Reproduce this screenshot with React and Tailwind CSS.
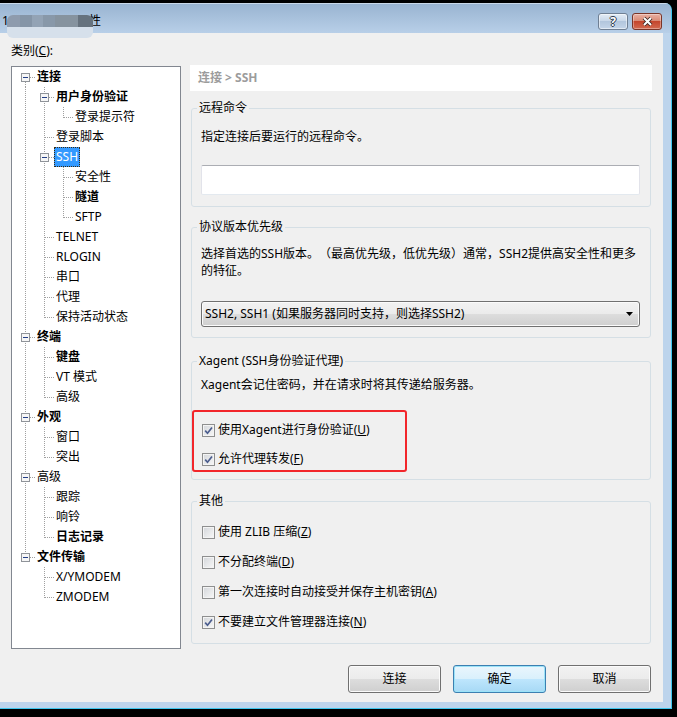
import React from 'react';

const rows = [
  ['连接', 'F', true, true],
  ['用户身份验证', '|T', true, true],
  ['登录提示符', '||L'],
  ['登录脚本', '|T'],
  ['SSH', '|T', false, true, true],
  ['安全性', '||T'],
  ['隧道', '||T', true],
  ['SFTP', '||L'],
  ['TELNET', '|T'],
  ['RLOGIN', '|T'],
  ['串口', '|T'],
  ['代理', '|T'],
  ['保持活动状态', '|L'],
  ['终端', 'T', true, true],
  ['键盘', '|T', true],
  ['VT 模式', '|T'],
  ['高级', '|L'],
  ['外观', 'T', true, true],
  ['窗口', '|T'],
  ['突出', '|L'],
  ['高级', 'T', false, true],
  ['跟踪', '|T'],
  ['响铃', '|T'],
  ['日志记录', '|L', true],
  ['文件传输', 'L', true, true],
  ['X/YMODEM', ' T'],
  ['ZMODEM', ' L'],
];

// one indent cell of the tree (dotted connector lines + optional expander box)
function Cell({ type, exp }) {
  const dot = { stroke: '#a0a0a0', strokeWidth: 1, strokeDasharray: '1 1', shapeRendering: 'crispEdges' };
  return (
    <svg width="19" height="20" className="block shrink-0">
      {(type === '|' || type === 'T') && <line x1="9.5" y1="0" x2="9.5" y2="20" {...dot} />}
      {type === 'L' && <line x1="9.5" y1="0" x2="9.5" y2="11" {...dot} />}
      {type === 'F' && <line x1="9.5" y1="11" x2="9.5" y2="20" {...dot} />}
      {(type === 'T' || type === 'L' || type === 'F') && <line x1="10" y1="10.5" x2="19" y2="10.5" {...dot} />}
      {exp && (
        <g shapeRendering="crispEdges">
          <rect x="5.5" y="6.5" width="8" height="8" fill="#f6f6f6" stroke="#8f9399" />
          <line x1="7" y1="10.5" x2="12" y2="10.5" stroke="#243f86" />
        </g>
      )}
    </svg>
  );
}

function TreeRow({ label, cells, bold, exp, selected }) {
  return (
    <div className="flex h-[20px] items-center">
      {cells.split('').map((c, i) => (
        <Cell key={i} type={c} exp={exp && i === cells.length - 1} />
      ))}
      {selected ? (
        <span className="h-[20px] border border-dotted border-[#3b2b10] bg-[#3399ff] px-[1px] leading-[18px] text-white">{label}</span>
      ) : (
        <span className={`ml-[2px] leading-[16px] whitespace-nowrap ${bold ? 'font-bold' : ''}`}>{label}</span>
      )}
    </div>
  );
}

function Check({ checked, children }) {
  return (
    <div className="flex h-[16px] items-center">
      <span className="ml-[1px] flex h-[13px] w-[13px] shrink-0 items-center justify-center border border-[#8e8f8f] bg-[linear-gradient(135deg,#d3d6da,#f8f8f8)] shadow-[inset_0_0_0_1px_#f4f4f4]">
        {checked && (
          <svg width="11" height="11" viewBox="0 0 11 11">
            <path d="M2.2 5.6 L4.5 8.2 L9 2.4" fill="none" stroke="#4b5d8e" strokeWidth="1.7" />
          </svg>
        )}
      </span>
      <span className="ml-[3px] leading-[16px] whitespace-nowrap">{children}</span>
    </div>
  );
}

function Group({ title, className, children }) {
  return (
    <fieldset className={`mx-[1px] rounded-[3px] border border-[#d5dfe5] pl-[9px] pr-[10px] ${className}`}>
      <legend className="-ml-[4px] px-[2px] leading-[16px]">{title}</legend>
      {children}
    </fieldset>
  );
}

function Btn({ children, primary }) {
  return (
    <div
      className={`flex h-[28px] w-[93px] items-center justify-center rounded-[3px] border ${
        primary
          ? 'border-[#3c7fb1] bg-[linear-gradient(#eaf6fd,#d9f0fc_50%,#bee6fd_50%,#a7d9f5)] shadow-[inset_0_0_0_1px_#9be3f8]'
          : 'border-[#707070] bg-[linear-gradient(#f2f2f2,#ebebeb_50%,#dddddd_50%,#cfcfcf)] shadow-[inset_0_0_0_1px_#fbfbfb]'
      }`}
    >
      {children}
    </div>
  );
}

export default function App() {
  return (
    <div className="h-[717px] w-[677px] overflow-hidden bg-black text-[12px] text-black [font-family:'Noto_Sans','Noto_Sans_CJK_SC',sans-serif] [text-spacing-trim:space-all]">
      <div className="mt-[3px] flex h-[706px] w-[672px] flex-col overflow-hidden rounded-tr-[7px] border-r border-b border-[#3ec6ee] bg-[#bdd4ec]">
        {/* title bar */}
        <div className="flex h-[30px] shrink-0 items-start justify-between border-t border-[#c9d8e9] bg-[linear-gradient(#99b4d1,#b8cfe8)]">
          <div className="flex items-start pl-[2px] pt-[11px]">
            <span className="leading-[12px]">1</span>
            <div className="relative z-10 -ml-[2px] flex w-[86px] flex-col overflow-hidden rounded-[6px]">
              <div className="flex h-[12px]">
                <div className="w-[13px] bg-[#8e9bad]" />
                <div className="w-[12px] bg-[#8595a7]" />
                <div className="w-[11px] bg-[#93a3b5]" />
                <div className="w-[12px] bg-[#8898a9]" />
                <div className="w-[23px] bg-[#86939f]" />
                <div className="w-[15px] bg-[#66727e]" />
              </div>
              <div className="h-[11px] bg-[#d6e0eb]" />
            </div>
            <span className="-ml-[4px] leading-[12px]">性</span>
          </div>
          <div className="mr-[9px] mt-[9px] flex gap-[4px]">
            <div className="flex h-[17px] w-[30px] items-center justify-center rounded-[3px] border border-[#6f7f93] bg-[linear-gradient(#e3ecf6,#c9d8e9_45%,#b2c6dd_50%,#c4d5e9)] shadow-[inset_0_0_0_1px_rgba(255,255,255,0.5)]">
              <span className="text-[12px] font-bold leading-none text-white [text-shadow:1px_0_0_#2e3b4c,-1px_0_0_#2e3b4c,0_1px_0_#2e3b4c,0_-1px_0_#2e3b4c]">?</span>
            </div>
            <div className="flex h-[17px] w-[30px] items-center justify-center rounded-[3px] border border-[#7a3528] bg-[linear-gradient(#e9b0a3,#d98b76_45%,#c4462d_50%,#d36a50)] shadow-[inset_0_0_0_1px_rgba(255,255,255,0.35)]">
              <svg width="13" height="11" viewBox="0 0 13 11">
                <path d="M3 2 L10 9 M10 2 L3 9" stroke="#3b2622" strokeWidth="3.8" />
                <path d="M3 2 L10 9 M10 2 L3 9" stroke="#ffffff" strokeWidth="2" />
              </svg>
            </div>
          </div>
        </div>

        {/* client area */}
        <div className="flex h-[669px] w-[663px] flex-col bg-[#f0f0f0] pl-[11px] pt-[10px]">
          <div className="flex items-start">
            <div className="w-[170px]">
              <div className="mb-[7px] h-[16px] leading-[16px]">
                类别(<u>C</u>):
              </div>
              <div className="h-[583px] w-[170px] border border-[#828790] bg-white pl-[4px]">
                {rows.map(([label, cells, bold, exp, selected], i) => (
                  <TreeRow key={i} label={label} cells={cells} bold={bold} exp={exp} selected={selected} />
                ))}
              </div>
            </div>

            <div className="ml-[9px] mt-[22px] w-[462px]">
              <div className="flex h-[26px] items-center bg-white pl-[8px] font-bold text-[#9c9c9c]">
                连接 &gt; SSH
              </div>

              <Group title="远程命令" className="mt-[9px] pb-[11px]">
                <div className="mt-[13px] leading-[16px]">指定连接后要运行的远程命令。</div>
                <div className="mt-[20px] h-[30px] rounded-[2px] border border-[#e2e3ea] border-t-[#abadb3] border-b-[#e3e9ef] bg-white" />
              </Group>

              <Group title="协议版本优先级" className="mt-[12px] pb-[10px]">
                <div className="mt-[10px] whitespace-nowrap leading-[17px]">
                  选择首选的SSH版本。（最高优先级，低优先级）通常，SSH2提供高安全性和更多
                  <br />
                  的特征。
                </div>
                <div className="mt-[22px] flex h-[26px] items-center justify-between rounded-[3px] border border-[#707070] bg-[linear-gradient(#f2f2f2,#ebebeb_50%,#dddddd_50%,#cfcfcf)] pl-[3px] pr-[6px] shadow-[inset_0_0_0_1px_#fbfbfb]">
                  <span className="whitespace-nowrap leading-[16px]">SSH2, SSH1 (如果服务器同时支持，则选择SSH2)</span>
                  <svg width="7" height="4" viewBox="0 0 7 4">
                    <path d="M0 0 H7 L3.5 4 Z" fill="#000" />
                  </svg>
                </div>
              </Group>

              <Group title="Xagent (SSH身份验证代理)" className="mt-[15px] pb-[7px]">
                <div className="mt-[8px] leading-[16px]">Xagent会记住密码，并在请求时将其传递给服务器。</div>
                <div className="-ml-[9px] mt-[17px] flex w-[215px] flex-col gap-[13px] rounded-[3px] border-2 border-[#f2262b] pb-[3px] pl-[7px] pt-[10px]">
                  <Check checked>
                    使用Xagent进行身份验证(<u>U</u>)
                  </Check>
                  <Check checked>
                    允许代理转发(<u>F</u>)
                  </Check>
                </div>
              </Group>

              <Group title="其他" className="mt-[13px] pb-[13px]">
                <div className="mt-[15px] flex flex-col gap-[14px]">
                  <Check>
                    使用 ZLIB 压缩(<u>Z</u>)
                  </Check>
                  <Check>
                    不分配终端(<u>D</u>)
                  </Check>
                  <Check>
                    第一次连接时自动接受并保存主机密钥(<u>A</u>)
                  </Check>
                  <Check checked>
                    不要建立文件管理器连接(<u>N</u>)
                  </Check>
                </div>
              </Group>
            </div>
          </div>

          <div className="mt-[16px] flex justify-end gap-[12px] pr-[12px]">
            <Btn>连接</Btn>
            <Btn primary>确定</Btn>
            <Btn>取消</Btn>
          </div>
        </div>
      </div>
    </div>
  );
}
